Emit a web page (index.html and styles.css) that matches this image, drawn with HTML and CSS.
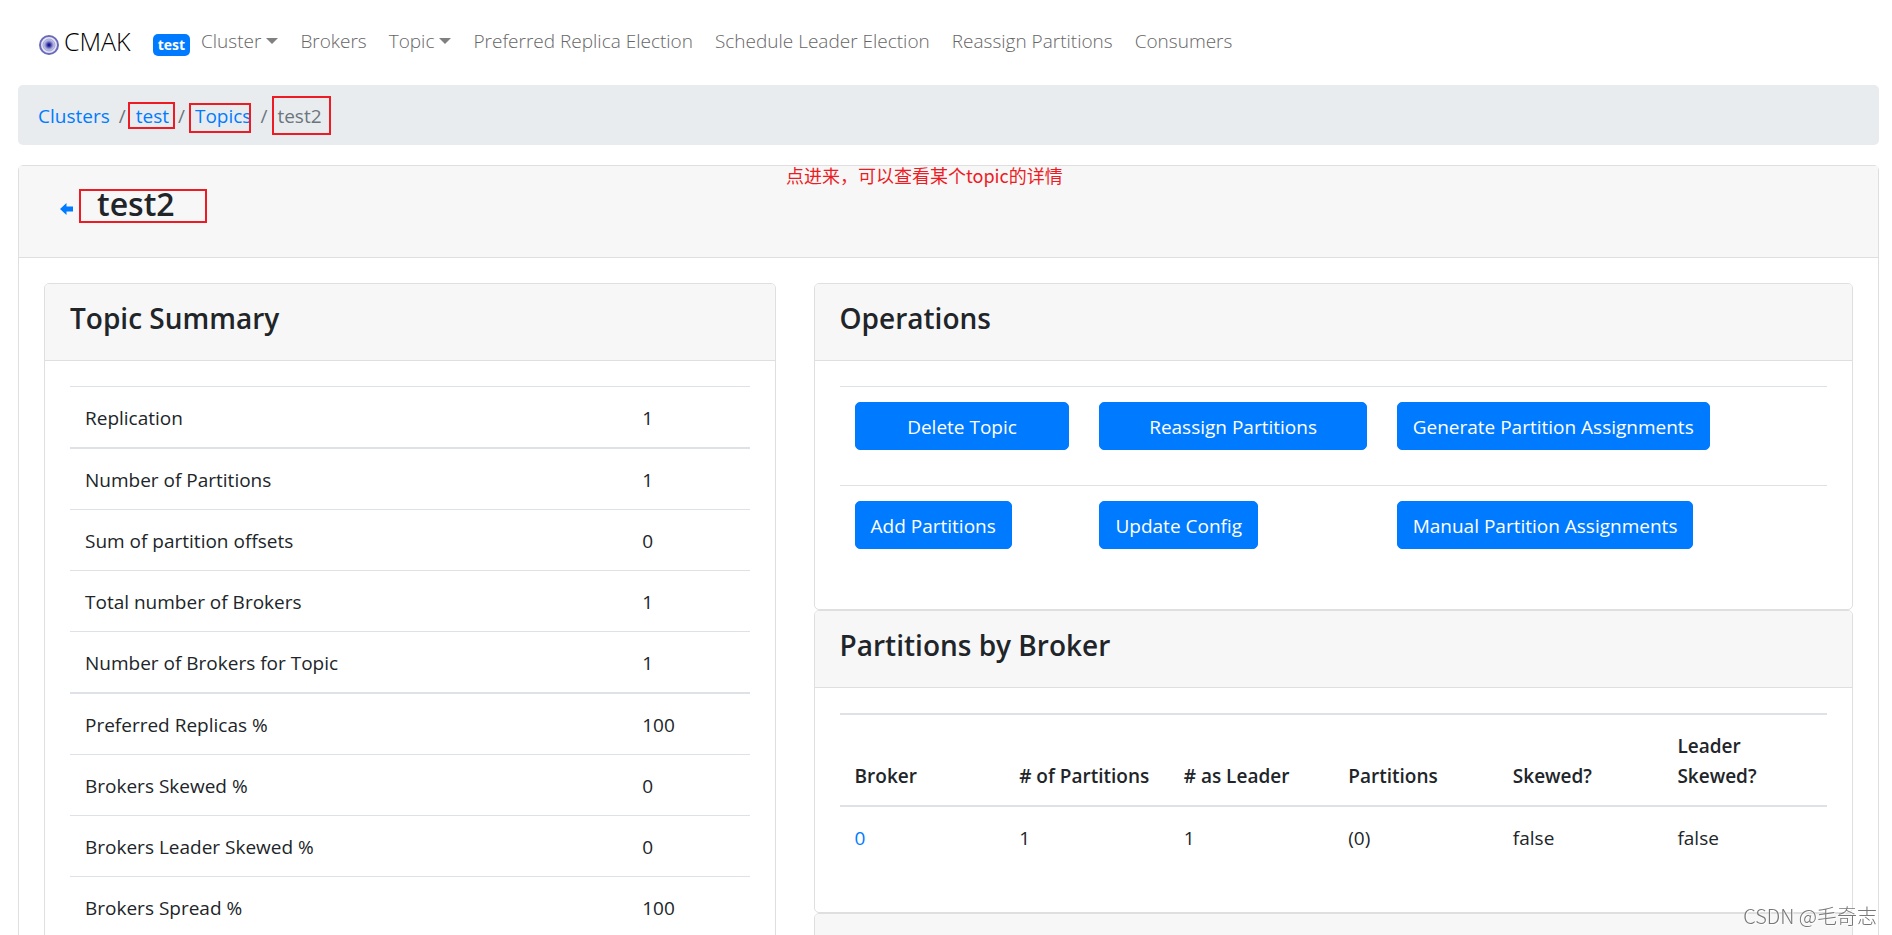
FILE: index.html
```html
<!DOCTYPE html>
<html lang="en">
<head>
<meta charset="utf-8">
<title>CMAK - test2</title>
<meta name="viewport" content="width=device-width, initial-scale=1">
<link rel="stylesheet" href="styles.css">
</head>
<body>
<nav class="navbar">
  <a class="brand" href="#">
    <svg class="brand-logo" viewBox="0 0 20 20" aria-hidden="true">
      <defs>
        <radialGradient id="core">
          <stop offset="0" stop-color="#00007c"/>
          <stop offset=".3" stop-color="#3a3aa6"/>
          <stop offset=".6" stop-color="#8f8fd0"/>
          <stop offset="1" stop-color="#d9d9f0"/>
        </radialGradient>
      </defs>
      <circle cx="10" cy="10" r="9" fill="#e6e6f5" stroke="#6a6abb" stroke-width="2"/>
      <circle cx="10" cy="10" r="6" fill="url(#core)" stroke="#a5a5d8" stroke-width="1"/>
    </svg>
    <span>CMAK</span>
  </a>
  <span class="badge">test</span>
  <ul class="nav-list">
    <li><button class="nav-link dropdown" type="button">Cluster</button></li>
    <li><a class="nav-link" href="#">Brokers</a></li>
    <li><button class="nav-link dropdown" type="button">Topic</button></li>
    <li><a class="nav-link" href="#">Preferred Replica Election</a></li>
    <li><a class="nav-link" href="#">Schedule Leader Election</a></li>
    <li><a class="nav-link" href="#">Reassign Partitions</a></li>
    <li><a class="nav-link" href="#">Consumers</a></li>
  </ul>
</nav>

<main class="page">
  <ol class="breadcrumb">
    <li><a href="#">Clusters</a></li>
    <li><a class="marked mark-cluster" href="#">test</a></li>
    <li><a class="marked mark-topics" href="#">Topics</a></li>
    <li><span class="marked mark-current">test2</span></li>
  </ol>

  <section class="card">
    <header class="topic-header">
      <a class="back" href="#" aria-label="Back">
        <svg viewBox="0 0 13 12" aria-hidden="true"><path d="M0 6 6.500 0V3.500H13V8.500H6.500V12Z" fill="#007bff"/></svg>
      </a>
      <h1 class="marked mark-title">test2</h1>
      <p class="note" lang="zh">点进来，可以查看某个topic的详情</p>
    </header>
    <div class="columns">
      <div class="column">
        <section class="card summary">
          <header class="card-header"><h2>Topic Summary</h2></header>
          <div class="card-body">
            <table class="table summary-table">
              <tbody>
                <tr><td>Replication</td><td>1</td></tr>
              </tbody>
              <tbody>
                <tr><td>Number of Partitions</td><td>1</td></tr>
                <tr><td>Sum of partition offsets</td><td>0</td></tr>
                <tr><td>Total number of Brokers</td><td>1</td></tr>
                <tr><td>Number of Brokers for Topic</td><td>1</td></tr>
              </tbody>
              <tbody>
                <tr><td>Preferred Replicas %</td><td>100</td></tr>
                <tr><td>Brokers Skewed %</td><td>0</td></tr>
                <tr><td>Brokers Leader Skewed %</td><td>0</td></tr>
                <tr><td>Brokers Spread %</td><td>100</td></tr>
              </tbody>
            </table>
          </div>
        </section>
      </div>
      <div class="column">
        <section class="card">
          <header class="card-header"><h2>Operations</h2></header>
          <div class="card-body">
            <table class="table operations-table">
              <tbody>
                <tr>
                  <td><button class="btn btn-block" type="button">Delete Topic</button></td>
                  <td><button class="btn btn-block" type="button">Reassign Partitions</button></td>
                  <td><button class="btn" type="button">Generate Partition Assignments</button></td>
                </tr>
                <tr>
                  <td><button class="btn" type="button">Add Partitions</button></td>
                  <td><button class="btn" type="button">Update Config</button></td>
                  <td><button class="btn" type="button">Manual Partition Assignments</button></td>
                </tr>
              </tbody>
            </table>
          </div>
        </section>
        <section class="card">
          <header class="card-header"><h2>Partitions by Broker</h2></header>
          <div class="card-body">
            <table class="table broker-table">
              <thead>
                <tr><th>Broker</th><th># of Partitions</th><th># as Leader</th><th>Partitions</th><th>Skewed?</th><th>Leader Skewed?</th></tr>
              </thead>
              <tbody>
                <tr><td><a href="#">0</a></td><td>1</td><td>1</td><td>(0)</td><td>false</td><td>false</td></tr>
              </tbody>
            </table>
          </div>
        </section>
        <section class="card">
          <header class="card-header"></header>
        </section>
      </div>
    </div>
  </section>
</main>
<div class="watermark" lang="zh">CSDN @毛奇志</div>
</body>
</html>
```
FILE: styles.css
```css
* {
  box-sizing: border-box;
}

body {
  margin: 0;
  height: 100vh;
  overflow: hidden;
  background: #fff;
  color: #212529;
  font: 400 19px/30px "Open Sans", "Noto Sans", "Noto Sans CJK SC", sans-serif;
}

a {
  color: #007bff;
  text-decoration: none;
}

h1,
h2,
p {
  margin: 0;
}

/* Navigation */

.navbar {
  display: flex;
  align-items: center;
  height: 85px;
  padding: 0 39px 4px;
  font-weight: 300;
}

.brand {
  display: flex;
  align-items: center;
  gap: 5px;
  margin-right: 22px;
  color: #000;
  font-size: 25px;
}

.brand-logo {
  width: 20px;
  height: 20px;
  margin-top: 8px;
}

.badge {
  margin-top: 8px;
  padding: 0 5px;
  border-radius: 5px;
  background: #007bff;
  color: #fff;
  font-size: 14px;
  font-weight: 700;
  line-height: 22px;
}

.nav-list {
  display: flex;
  gap: 22px;
  margin: 0;
  padding: 0 0 0 11px;
  list-style: none;
}

.nav-link {
  display: flex;
  align-items: center;
  gap: 5px;
  padding: 0;
  border: 0;
  background: none;
  color: #666;
  font: inherit;
  white-space: nowrap;
}

.dropdown::after {
  content: "";
  border: 6px solid transparent;
  border-top-color: #808080;
  border-bottom: 0;
}

/* Page frame */

.page {
  padding: 0 13px 0 18px;
}

.breadcrumb {
  display: flex;
  margin: 0 0 20px;
  padding: 16px 20px 14px;
  border-radius: 5px;
  background: #e9ecef;
  color: #6c757d;
  list-style: none;
}

.breadcrumb li + li::before {
  content: "/";
  padding: 0 10px 0 9px;
}

.card {
  border: 1px solid #dfdfdf;
  border-radius: 5px;
  background: #fff;
}

.topic-header {
  position: relative;
  display: flex;
  align-items: center;
  height: 92px;
  padding: 0 41px 15px;
  border-bottom: 1px solid #dfdfdf;
  background: #f7f7f7;
}

.topic-header h1 {
  font-size: 32px;
  font-weight: 600;
  line-height: 42px;
}

.back {
  display: flex;
  margin: 10px 24px 0 0;
}

.back svg {
  width: 13px;
  height: 12px;
}

.columns {
  display: grid;
  grid-template-columns: 5fr 7fr;
  margin: 0 6px;
  padding: 25px 0;
}

.column {
  min-width: 0;
  padding: 0 19px;
}

.summary {
  height: 100%;
}

.card-header {
  min-height: 77px;
  padding: 16px 25px 24px;
  border-bottom: 1px solid #dfdfdf;
  border-radius: 4px 4px 0 0;
  background: #f7f7f7;
}

.card-header h2 {
  font-size: 28px;
  font-weight: 600;
  line-height: 36px;
}

.card-body {
  padding: 25px;
}

/* Tables */

.table {
  width: 100%;
  border-spacing: 0;
  table-layout: fixed;
}

.table td,
.table th {
  padding: 16px 15px 14px;
  border-top: 1px solid #dee2e6;
  text-align: left;
  vertical-align: top;
}

.table tbody + tbody tr:first-child td {
  border-top-width: 2px;
}

.summary-table td:first-child {
  width: 82%;
}

.table.operations-table td {
  padding: 15px 15px 35px;
}

.operations-table td:nth-child(1) {
  width: 24.8%;
}

.operations-table td:nth-child(2) {
  width: 30.1%;
}

.broker-table {
  margin-bottom: 20px;
}

.table.broker-table th {
  border-top-width: 2px;
  border-bottom: 2px solid #dee2e6;
  font-weight: 600;
  vertical-align: bottom;
}

.table.broker-table tbody td {
  border-top: 0;
}

.btn {
  display: block;
  height: 48px;
  padding: 1px 15px 0;
  border: 1px solid #007bff;
  border-radius: 5px;
  background: #007bff;
  color: #fff;
  font: inherit;
  white-space: nowrap;
}

.btn-block {
  width: 100%;
}

/* Red call-outs laid over the page */

.marked {
  position: relative;
}

.marked::after {
  content: "";
  position: absolute;
  border: 2px solid #ed1c24;
}

.mark-cluster::after {
  inset: -1px -6px 0 -8px;
}

.mark-topics::after {
  inset: 0 0 -4px -6px;
}

.mark-current::after {
  inset: -7px -9px -6px -5px;
}

.mark-title::after {
  inset: 6px -32px 2px -18px;
}

.note {
  position: absolute;
  top: -1px;
  left: 767px;
  color: #ed1c24;
  font-family: "Noto Sans CJK SC", sans-serif;
  font-size: 18px;
  line-height: 20px;
}

.watermark {
  position: fixed;
  right: 15px;
  bottom: 4px;
  color: #777;
  font-family: "Noto Sans CJK SC", sans-serif;
  font-size: 20px;
  font-weight: 300;
  text-shadow: 1px 1px 1px #fff;
}
```
